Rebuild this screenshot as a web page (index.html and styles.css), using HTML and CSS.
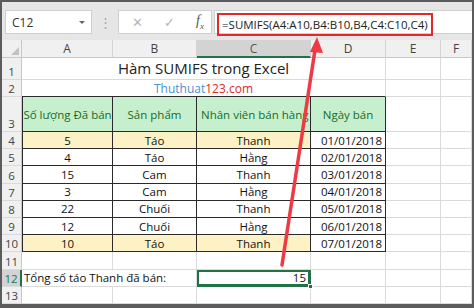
FILE: index.html
```html
<!DOCTYPE html>
<html>
<head>
	<meta charset="utf-8">
	<title>Hàm SUMIFS trong Excel</title>
	<link rel="stylesheet" href="styles.css">
</head>
<body>
	<div class='app'>
		<div class='formula-bar'>
			<div class='name-box'><span>C12</span><span class='caret'></span></div>
			<div class='grip'>⋮</div>
			<div class='fx-box'><span class='btn'>✕</span><span class='btn'>✓</span><span class='fx'>f<sub>x</sub></span></div>
			<div class='formula'><span class='mark'>=SUMIFS(A4:A10,B4:B10,B4,C4:C10,C4)</span></div>
		</div>

		<div class='sheet'>
			<!-- column headers -->
			<div class='corner'><span></span></div>
			<div class='ch'>A</div><div class='ch'>B</div><div class='ch is-active'>C</div><div class='ch'>D</div><div class='ch'>E</div><div class='ch'>F</div>

			<div class='rh'>1</div>
			<div class='c title span4'>Hàm SUMIFS trong Excel</div>
			<div class='c'></div><div class='c'></div>

			<div class='rh'>2</div>
			<div class='c site span4'><span class='blue'>Thuthuat</span><span class='red'>123.com</span></div>
			<div class='c'></div><div class='c'></div>

			<div class='rh'>3</div>
			<div class='t tl hd'>Số lượng Đã bán</div><div class='t hd'>Sản phẩm</div><div class='t hd clip'><span>Nhân viên bán hàng</span></div><div class='t hd'>Ngày bán</div>
			<div class='c'></div><div class='c'></div>

			<div class='rh'>4</div>
			<div class='t tl y'>5</div><div class='t y'>Táo</div><div class='t y'>Thanh</div><div class='t r'>01/01/2018</div>
			<div class='c'></div><div class='c'></div>

			<div class='rh'>5</div>
			<div class='t tl'>4</div><div class='t'>Táo</div><div class='t'>Hằng</div><div class='t r'>02/01/2018</div>
			<div class='c'></div><div class='c'></div>

			<div class='rh'>6</div>
			<div class='t tl'>15</div><div class='t'>Cam</div><div class='t'>Thanh</div><div class='t r'>03/01/2018</div>
			<div class='c'></div><div class='c'></div>

			<div class='rh'>7</div>
			<div class='t tl'>3</div><div class='t'>Cam</div><div class='t'>Hằng</div><div class='t r'>04/01/2018</div>
			<div class='c'></div><div class='c'></div>

			<div class='rh'>8</div>
			<div class='t tl'>22</div><div class='t'>Chuối</div><div class='t'>Thanh</div><div class='t r'>05/01/2018</div>
			<div class='c'></div><div class='c'></div>

			<div class='rh'>9</div>
			<div class='t tl'>12</div><div class='t'>Chuối</div><div class='t'>Hằng</div><div class='t r'>06/01/2018</div>
			<div class='c'></div><div class='c'></div>

			<div class='rh'>10</div>
			<div class='t tl y'>10</div><div class='t y'>Táo</div><div class='t y'>Thanh</div><div class='t r'>07/01/2018</div>
			<div class='c'></div><div class='c'></div>

			<div class='rh'>11</div>
			<div class='c'></div><div class='c'></div><div class='c'></div><div class='c'></div><div class='c'></div><div class='c'></div>

			<div class='rh is-active'>12</div>
			<div class='c l span2'>Tổng số táo Thanh đã bán:</div>
			<div class='c r selected'>15<span class='handle'></span></div>
			<div class='c'></div><div class='c'></div><div class='c'></div>

			<div class='rh'>13</div>
			<div class='c'></div><div class='c'></div><div class='c'></div><div class='c'></div><div class='c'></div><div class='c'></div>
		</div>
	</div>

	<!-- annotation arrow -->
	<svg class='arrow' width='474' height='308' viewBox='0 0 474 308'>
		<line x1='282' y1='265' x2='315' y2='50' stroke='#ee3a43' stroke-width='3.5' stroke-linecap='round' />
		<polygon points='317,37 310,52 323,53' fill='#ee3a43' />
	</svg>
</body>
</html>
```

FILE: styles.css
```css
* {
	box-sizing: border-box;
}

html,
body {
	margin: 0;
	padding: 0;
}

body {
	width: 474px;
	height: 308px;
	background-color: #5c5c5c;
	font-family: "Open Sans", "Noto Sans", sans-serif;
	color: #111;
	position: relative;
	overflow: hidden;
}

.app {
	margin: 2px 2px 0 2px;
	width: 470px;
	height: 302px;
	background-color: #e6e6e6;
	display: flex;
	flex-direction: column;
	overflow: hidden;
}

/* formula bar */

.formula-bar {
	height: 38px;
	display: flex;
	align-items: flex-start;
	padding: 8px 0 0 3px;
}

.name-box {
	width: 87px;
	height: 24px;
	background-color: #fff;
	border: 1px solid #cfcfcf;
	display: flex;
	align-items: center;
	justify-content: space-between;
	padding: 0 6px 0 6px;
	font-size: 12px;
	color: #333;
}

.caret {
	width: 0;
	height: 0;
	border-left: 3px solid transparent;
	border-right: 3px solid transparent;
	border-top: 3px solid #666;
}

.grip {
	width: 26px;
	text-align: center;
	color: #a8a8a8;
	font-size: 13px;
	line-height: 24px;
}

.fx-box {
	width: 94px;
	height: 24px;
	background-color: #fff;
	border: 1px solid #cfcfcf;
	display: flex;
	align-items: center;
	gap: 21px;
	padding: 0 0 0 13px;
	color: #b5b5b5;
	font-size: 13px;
}

.fx {
	font-family: "Liberation Serif", serif;
	font-style: italic;
	color: #555;
	font-size: 14px;
}

.fx sub {
	font-size: 9px;
}

.formula {
	margin-left: 2px;
	flex: 1;
	height: 24px;
	background-color: #fff;
	border: 1px solid #cfcfcf;
	border-right: none;
	padding-left: 2px;
}

.mark {
	display: inline-block;
	margin-top: 2px;
	height: 23px;
	width: 216px;
	border: 2px solid #e0282f;
	padding: 0 0 0 3px;
	font-size: 11.5px;
	line-height: 19px;
	color: #222;
	white-space: nowrap;
}

/* grid */

.sheet {
	flex: 1;
	display: grid;
	grid-template-columns: 20px 91px 84px 114px 75px 55px 31px;
	grid-template-rows: 18px 22px 17px 35px repeat(10, 17.2px);
	background-color: #fff;
	font-size: 11.5px;
}

.corner {
	background-color: #f0f0f0;
	border-right: 1px solid #c8c8c8;
	border-bottom: 1px solid #c8c8c8;
	position: relative;
}

.corner span {
	position: absolute;
	right: 2px;
	bottom: 2px;
	width: 0;
	height: 0;
	border-left: 8px solid transparent;
	border-bottom: 8px solid #c2c2c2;
}

.ch {
	background-color: #f0f0f0;
	border-right: 1px solid #d4d4d4;
	border-bottom: 1px solid #c8c8c8;
	display: flex;
	align-items: center;
	justify-content: center;
	color: #444;
	font-size: 12px;
}

.ch.is-active {
	background-color: #d3d3d3;
	border-bottom: 2px solid #217346;
	color: #555;
}

.rh {
	background-color: #f0f0f0;
	border-right: 1px solid #c8c8c8;
	border-bottom: 1px solid #dadada;
	display: flex;
	align-items: flex-end;
	justify-content: center;
	color: #444;
	font-size: 11.5px;
	line-height: 15px;
}

.rh.is-active {
	background-color: #d3d3d3;
	border-right: 2px solid #217346;
	color: #217346;
}

.c,
.t {
	border-right: 1px solid #dadada;
	border-bottom: 1px solid #dadada;
	display: flex;
	align-items: center;
	justify-content: center;
	white-space: nowrap;
	overflow: hidden;
}

.t {
	border-right-color: #2a2a2a;
	border-bottom-color: #2a2a2a;
}

.t.tl {
	border-left: 1px solid #2a2a2a;
}

.span4 {
	grid-column: span 4;
}

.span2 {
	grid-column: span 2;
}

.title {
	font-size: 15px;
	align-items: flex-end;
	padding-bottom: 1px;
	color: #222;
}

.site {
	font-size: 12px;
	border-bottom-color: #2a2a2a;
}

.blue {
	color: #4d8fcf;
}

.red {
	color: #e0282f;
}

.hd {
	background-color: #c6efce;
	color: #176b2a;
}

.clip {
	justify-content: flex-start;
	padding-left: 4px;
}

.y {
	background-color: #fdf2c6;
}

.r {
	justify-content: flex-end;
	padding-right: 3px;
}

.l {
	justify-content: flex-start;
	padding-left: 2px;
	overflow: visible;
}

.selected {
	position: relative;
	overflow: visible;
	box-shadow: inset 0 0 0 2px #217346;
	border-right-color: #217346;
	border-bottom-color: #217346;
	padding-right: 4px;
}

.handle {
	position: absolute;
	right: -3px;
	bottom: -3px;
	width: 5px;
	height: 5px;
	background-color: #217346;
	border: 1px solid #fff;
}

.arrow {
	position: absolute;
	left: 0;
	top: 0;
	pointer-events: none;
}
```
